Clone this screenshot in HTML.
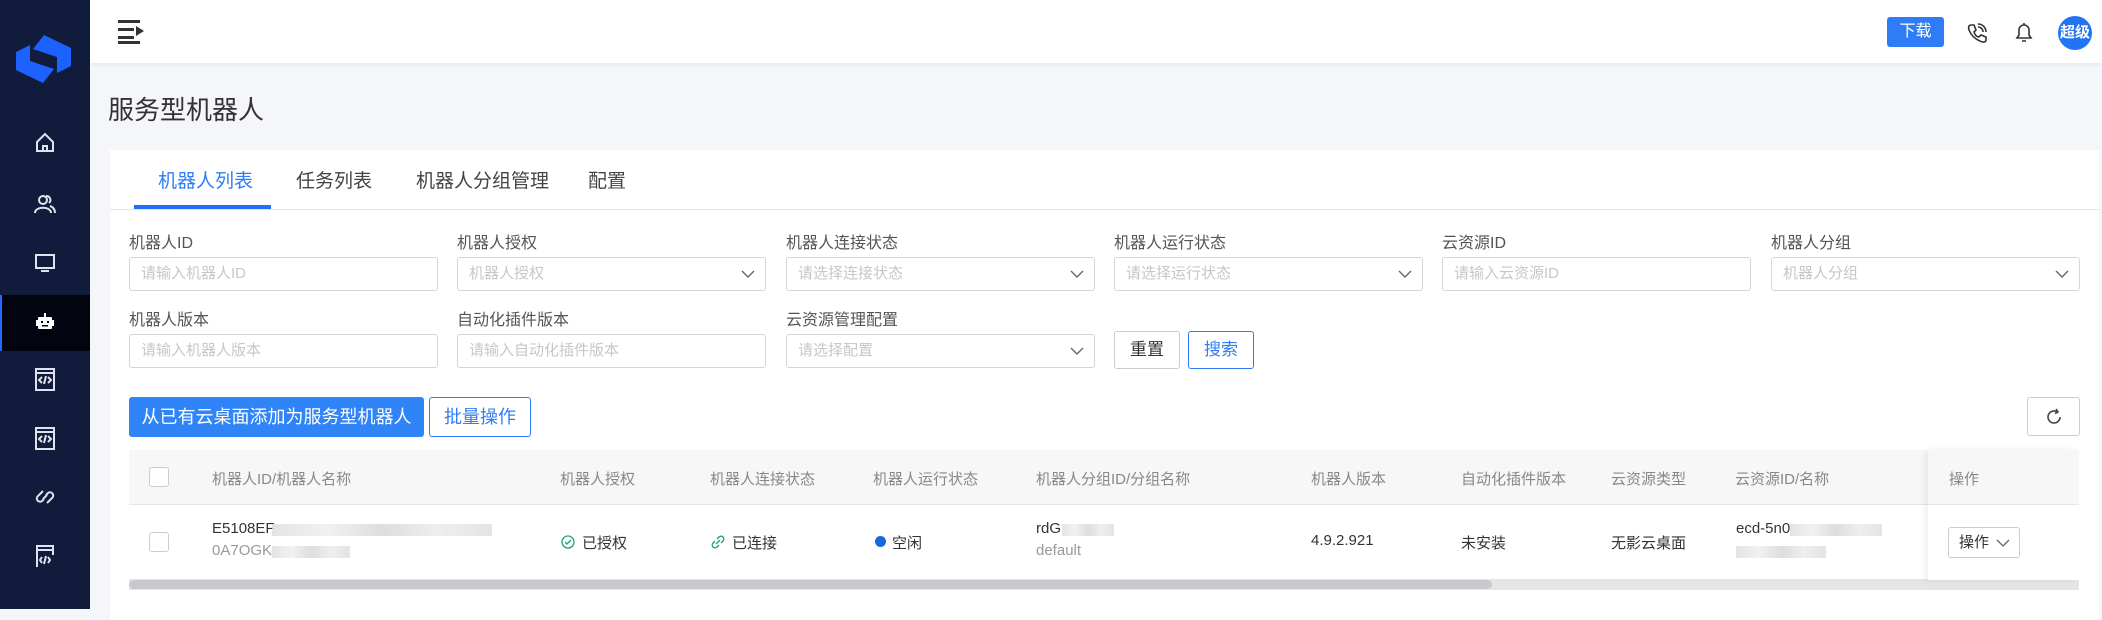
<!DOCTYPE html>
<html><head><meta charset="utf-8"><style>
*{margin:0;padding:0;box-sizing:border-box}
body{width:2102px;height:609px;overflow:hidden;background:#f5f6fa;font-family:"Liberation Sans","Noto Sans CJK SC",sans-serif;color:#333;position:relative}
.a{position:absolute;white-space:nowrap}
.side{left:0;top:0;width:90px;height:609px;background:#111b3c}
.hdr{left:90px;top:0;width:2012px;height:63px;background:#fff;box-shadow:0 2px 4px rgba(0,40,120,.06)}
.card{left:110px;top:150px;width:1989px;height:470px;background:#fff}
.lbl{font-size:16px;color:#555}
.inp{height:34px;width:309px;border:1px solid #d3d6dc;border-radius:3px;background:#fff;font-size:15px;color:#c4c7cc;padding-left:11px;line-height:32px}
.chev{position:absolute;right:10px;top:9px;width:14px;height:14px}
.btn{border:1px solid #c9ccd2;border-radius:3px;background:#fff;text-align:center;font-size:18px}
.th{font-size:15px;color:#888;top:468px}
.td{font-size:15px;color:#333}
.blur{background:linear-gradient(90deg,#ddd,#eee,#d5d5d5,#eaeaea,#ddd);height:12px;opacity:.8}
.ic{position:absolute;left:22px;width:46px;height:46px}
</style></head><body>
<div class="a side"></div>
<div class="a" style="left:0;top:295px;width:90px;height:56px;background:#02050f;border-left:2px solid #1f6bff"></div>
<svg class="a" style="left:15px;top:35px" width="57" height="48" viewBox="0 0 57 48"><path d="M29 0 L56 13 L56 31 L42 38 L42 22 L18 14 Z" fill="#1d62ff"/><path d="M28 48 L1 35 L1 17 L15 10 L15 26 L39 34 Z" fill="#1d62ff"/></svg>
<svg class="ic" style="top:120px" viewBox="0 0 46 46" fill="none" stroke="#dfe3ee" stroke-width="2"><path d="M15 22 L23 14 L31 22 V31 H15 Z M21 31 V26 H25 V31"/></svg>
<svg class="ic" style="top:182px" viewBox="0 0 46 46" fill="none" stroke="#dfe3ee" stroke-width="2"><circle cx="21" cy="18" r="4"/><path d="M13 31 C13 24 29 24 29 31"/><path d="M24 14 A4 4 0 0 1 27 21 M28 24 C31 25 33 27 33 31"/></svg>
<svg class="ic" style="top:240px" viewBox="0 0 46 46" fill="none" stroke="#dfe3ee" stroke-width="2"><rect x="14" y="15" width="18" height="13"/><path d="M19 31 H27"/></svg>
<svg class="ic" style="top:300px" viewBox="0 0 46 46" fill="#fff"><rect x="22" y="13" width="2" height="4"/><rect x="16" y="17" width="14" height="12" rx="1"/><rect x="14" y="20" width="2" height="6"/><rect x="30" y="20" width="2" height="6"/><rect x="19" y="21" width="2" height="2" fill="#02050f"/><rect x="25" y="21" width="2" height="2" fill="#02050f"/><rect x="20" y="25" width="6" height="1.5" fill="#02050f"/></svg>
<svg class="ic" style="top:356px" viewBox="0 0 46 46" fill="none" stroke="#dfe3ee" stroke-width="2"><rect x="14" y="13" width="18" height="21"/><path d="M14 17 H32 M20 21 L17 24 L20 27 M26 21 L29 24 L26 27 M24 20 L22 28"/></svg>
<svg class="ic" style="top:415px" viewBox="0 0 46 46" fill="none" stroke="#dfe3ee" stroke-width="2"><rect x="14" y="13" width="18" height="21"/><path d="M14 17 H32 M20 21 L17 24 L20 27 M26 21 L29 24 L26 27 M24 20 L22 28"/></svg>
<svg class="ic" style="top:474px" viewBox="0 0 46 46" fill="none" stroke="#dfe3ee" stroke-width="2"><path d="M21 17 L16 22 A3 3 0 0 0 20 27 L22 25 M25 29 L30 24 A3 3 0 0 0 26 19 L24 21 M21 25 L25 21"/></svg>
<svg class="ic" style="top:533px" viewBox="0 0 46 46" fill="none" stroke="#dfe3ee" stroke-width="2"><path d="M15 34 V13 H31 V22 M15 17 H31"/><path d="M20 24 L18 27 L20 30 M26 24 L28 27 L26 30 M24 23 L22 31"/></svg>
<div class="a hdr"></div>
<svg class="a" style="left:118px;top:20px" width="28" height="24" viewBox="0 0 28 24" fill="#333"><rect x="0" y="0" width="22" height="3"/><rect x="0" y="8" width="16" height="3"/><rect x="0" y="16" width="16" height="3"/><rect x="0" y="21" width="22" height="3"/><path d="M18 6 L26 11 L18 16Z"/></svg>
<div class="a" style="left:1887px;top:17px;width:57px;height:30px;background:#2f7df6;border-radius:3px;color:#fff;font-size:16px;text-align:center;line-height:30px">下载</div>
<svg class="a" style="left:1966px;top:22px" width="22" height="22" viewBox="0 0 22 22" fill="none" stroke="#333" stroke-width="1.6"><path d="M5 3 L8 3 L10 8 L8 10 C9 13 11 15 13 15 L15 13 L20 15 L20 18 C20 20 17 21 14 19 C9 17 5 13 3 8 C2 5 3 3 5 3Z"/><path d="M12 5 A5 5 0 0 1 17 10 M12 2 A8 8 0 0 1 20 10"/></svg>
<svg class="a" style="left:2014px;top:21px" width="20" height="24" viewBox="0 0 20 24" fill="none" stroke="#333" stroke-width="1.6"><path d="M3 17 H17 L15 14 V9 A5 5 0 0 0 5 9 V14 Z M8 20 H12 M10 2 V4"/></svg>
<div class="a" style="left:2058px;top:16px;width:34px;height:34px;border-radius:50%;background:#2374f5;color:#fff;font-size:15px;text-align:center;line-height:34px;font-weight:bold">超级</div>
<div class="a" style="left:108px;top:90px;font-size:26px;color:#333">服务型机器人</div>
<div class="a card"></div>
<div class="a" style="left:158px;top:166px;font-size:19px;color:#2f7df6">机器人列表</div>
<div class="a" style="left:296px;top:166px;font-size:19px;color:#444">任务列表</div>
<div class="a" style="left:416px;top:166px;font-size:19px;color:#444">机器人分组管理</div>
<div class="a" style="left:588px;top:166px;font-size:19px;color:#444">配置</div>
<div class="a" style="left:110px;top:209px;width:1989px;height:1px;background:#e3e5e9"></div>
<div class="a" style="left:134px;top:205px;width:137px;height:4px;background:#1e6ffa"></div>

<div class="a lbl" style="left:129px;top:229px">机器人ID</div>
<div class="a lbl" style="left:457px;top:229px">机器人授权</div>
<div class="a lbl" style="left:786px;top:229px">机器人连接状态</div>
<div class="a lbl" style="left:1114px;top:229px">机器人运行状态</div>
<div class="a lbl" style="left:1442px;top:229px">云资源ID</div>
<div class="a lbl" style="left:1771px;top:229px">机器人分组</div>
<div class="a inp" style="left:129px;top:257px">请输入机器人ID</div>
<div class="a inp" style="left:457px;top:257px">机器人授权<svg class="chev" viewBox="0 0 14 14"><path d="M1 4 L7 10 L13 4" fill="none" stroke="#666" stroke-width="1.4"/></svg></div>
<div class="a inp" style="left:786px;top:257px">请选择连接状态<svg class="chev" viewBox="0 0 14 14"><path d="M1 4 L7 10 L13 4" fill="none" stroke="#666" stroke-width="1.4"/></svg></div>
<div class="a inp" style="left:1114px;top:257px">请选择运行状态<svg class="chev" viewBox="0 0 14 14"><path d="M1 4 L7 10 L13 4" fill="none" stroke="#666" stroke-width="1.4"/></svg></div>
<div class="a inp" style="left:1442px;top:257px">请输入云资源ID</div>
<div class="a inp" style="left:1771px;top:257px">机器人分组<svg class="chev" viewBox="0 0 14 14"><path d="M1 4 L7 10 L13 4" fill="none" stroke="#666" stroke-width="1.4"/></svg></div>

<div class="a lbl" style="left:129px;top:306px">机器人版本</div>
<div class="a lbl" style="left:457px;top:306px">自动化插件版本</div>
<div class="a lbl" style="left:786px;top:306px">云资源管理配置</div>
<div class="a inp" style="left:129px;top:334px">请输入机器人版本</div>
<div class="a inp" style="left:457px;top:334px">请输入自动化插件版本</div>
<div class="a inp" style="left:786px;top:334px">请选择配置<svg class="chev" viewBox="0 0 14 14"><path d="M1 4 L7 10 L13 4" fill="none" stroke="#666" stroke-width="1.4"/></svg></div>
<div class="a btn" style="left:1114px;top:331px;width:66px;height:38px;line-height:36px;font-size:17px">重置</div>
<div class="a btn" style="left:1188px;top:331px;width:66px;height:38px;line-height:36px;font-size:17px;border-color:#2f7df6;color:#2f7df6">搜索</div>

<div class="a" style="left:129px;top:397px;width:295px;height:40px;background:#2f84f8;border-radius:3px;color:#fff;font-size:18px;text-align:center;line-height:40px">从已有云桌面添加为服务型机器人</div>
<div class="a btn" style="left:429px;top:397px;width:102px;height:40px;line-height:38px;border-color:#2f7df6;color:#2f7df6">批量操作</div>
<div class="a btn" style="left:2027px;top:397px;width:53px;height:39px"><svg style="margin-top:10px" width="18" height="18" viewBox="0 0 18 18" fill="none" stroke="#444" stroke-width="1.6"><path d="M15 9 A6 6 0 1 1 12 3.8"/><path d="M11 1 L13 4 L10 5.5"/></svg></div>

<div class="a" style="left:129px;top:450px;width:1950px;height:55px;background:#f7f7f8;border-bottom:1px solid #e3e5e9"></div>
<div class="a" style="left:149px;top:467px;width:20px;height:20px;border:1px solid #c9ccd2;border-radius:3px;background:#fff"></div>
<div class="a th" style="left:212px">机器人ID/机器人名称</div>
<div class="a th" style="left:560px">机器人授权</div>
<div class="a th" style="left:710px">机器人连接状态</div>
<div class="a th" style="left:873px">机器人运行状态</div>
<div class="a th" style="left:1036px">机器人分组ID/分组名称</div>
<div class="a th" style="left:1311px">机器人版本</div>
<div class="a th" style="left:1461px">自动化插件版本</div>
<div class="a th" style="left:1611px">云资源类型</div>
<div class="a th" style="left:1735px">云资源ID/名称</div>

<div class="a" style="left:149px;top:532px;width:20px;height:20px;border:1px solid #c9ccd2;border-radius:3px;background:#fff"></div>
<div class="a td" style="left:212px;top:520px">E5108EF</div>
<div class="a blur" style="left:272px;top:524px;width:220px"></div>
<div class="a td" style="left:212px;top:542px;color:#999">0A7OGK</div>
<div class="a blur" style="left:272px;top:546px;width:78px"></div>
<svg class="a" style="left:561px;top:535px" width="14" height="14" viewBox="0 0 14 14" fill="none" stroke="#1aa36f" stroke-width="1.3"><circle cx="7" cy="7" r="6"/><path d="M4 7 L6 9 L10 5"/></svg>
<div class="a td" style="left:582px;top:532px">已授权</div>
<svg class="a" style="left:711px;top:535px" width="14" height="14" viewBox="0 0 14 14" fill="none" stroke="#1aa36f" stroke-width="1.3"><path d="M6 4 L8 2 A2 2 0 0 1 12 6 L10 8 M8 10 L6 12 A2 2 0 0 1 2 8 L4 6 M5 9 L9 5"/></svg>
<div class="a td" style="left:732px;top:532px">已连接</div>
<div class="a" style="left:875px;top:536px;width:11px;height:11px;border-radius:50%;background:#1569d8"></div>
<div class="a td" style="left:892px;top:532px">空闲</div>
<div class="a td" style="left:1036px;top:520px">rdG</div>
<div class="a blur" style="left:1062px;top:524px;width:52px"></div>
<div class="a td" style="left:1036px;top:542px;color:#999">default</div>
<div class="a td" style="left:1311px;top:532px">4.9.2.921</div>
<div class="a td" style="left:1461px;top:532px">未安装</div>
<div class="a td" style="left:1611px;top:532px">无影云桌面</div>
<div class="a td" style="left:1736px;top:520px">ecd-5n0</div>
<div class="a blur" style="left:1790px;top:524px;width:92px"></div>
<div class="a blur" style="left:1736px;top:546px;width:90px"></div>

<div class="a" style="left:129px;top:579px;width:1950px;height:11px;background:#e5e5e7"></div>
<div class="a" style="left:129px;top:580px;width:1363px;height:9px;background:#c8c9cc;border-radius:5px"></div>

<div class="a" style="left:1928px;top:450px;width:151px;height:130px;background:#fff;box-shadow:-4px 0 6px rgba(0,0,0,.06)"></div>
<div class="a" style="left:1928px;top:450px;width:151px;height:55px;background:#f7f7f8;border-bottom:1px solid #e3e5e9"></div>
<div class="a th" style="left:1949px">操作</div>
<div class="a" style="left:1948px;top:527px;width:72px;height:31px;border:1px solid #c9ccd2;border-radius:3px;font-size:15px;line-height:29px;padding-left:10px">操作<svg style="position:absolute;left:47px;top:9px" width="14" height="12" viewBox="0 0 14 12"><path d="M1 3 L7 9 L13 3" fill="none" stroke="#666" stroke-width="1.3"/></svg></div>
</body></html>
